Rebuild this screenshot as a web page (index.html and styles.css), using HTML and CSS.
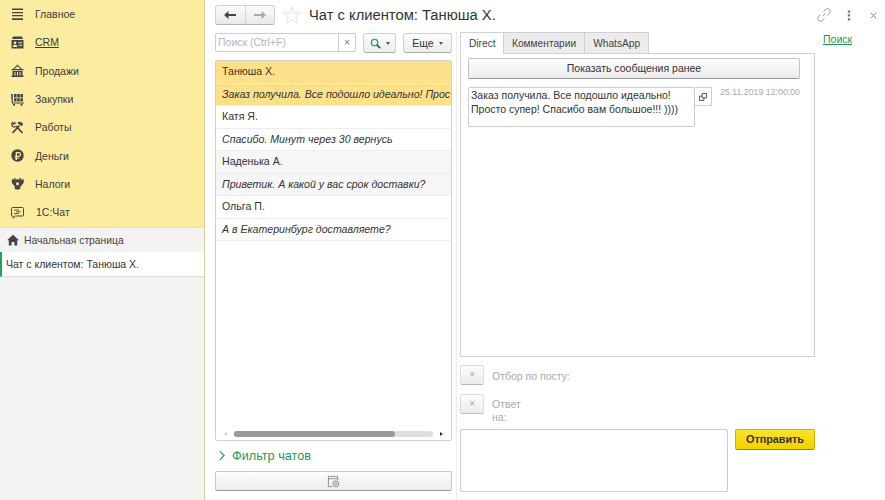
FILE: index.html
```html
<!DOCTYPE html>
<html>
<head>
    <link rel="stylesheet" href="styles.css">
    <title>Чат с клиентом</title>
</head>
<body>
    <div class="sidebar">
        <div class="menu">
            <div class="menu-item">
                <svg class="menu-icon" viewBox="0 0 13 13"><path d="M1 .5h11v1.600H1zM1 4h11v1.300H1zM1 7h11v1.300H1zM1 10.300h11V12H1z"/></svg>
                <span>Главное</span>
            </div>
            <div class="menu-item">
                <svg class="menu-icon" viewBox="0 0 13 13"><path d="M2 .5h9l1 2.500H1zM.5 4h12v8.500H.5z"/><circle cx="4" cy="6.800" r="1.300" fill="#fcec9f"/><path d="M1.800 11c0-1.600.8-2.200 2.200-2.200S6.200 9.400 6.200 11zM7.500 6.200h3.500v1.100H7.500zM7.500 8.700h3.500v1.100H7.500z" fill="#fcec9f"/></svg>
                <span class="underlined">CRM</span>
            </div>
            <div class="menu-item">
                <svg class="menu-icon" viewBox="0 0 13 13"><path fill-rule="evenodd" d="M6.500.5L11 5h1.500v1.200H.5V5H2zM3.500 5h6L6.500 2zM1.500 7h10v4.500h1V13H.5v-1.500h1zM3.500 8v3.500h1V8zM6 8v3.500h1V8zM8.500 8v3.500h1V8z"/></svg>
                <span>Продажи</span>
            </div>
            <div class="menu-item">
                <svg class="menu-icon" viewBox="0 0 13 13"><path d="M0 1h1.800v8.500H13v1H.8zM3 1h2.600v3.400H3zM6.200 1h2.600v3.400H6.200zM9.400 1H12v3.400H9.400zM3 5.200h2.600v3.400H3zM6.200 5.200h2.600v3.400H6.200zM9.400 5.200H12v3.400H9.400z"/><circle cx="3" cy="11.800" r="1.100"/><circle cx="10.500" cy="11.800" r="1.100"/></svg>
                <span>Закупки</span>
            </div>
            <div class="menu-item">
                <svg class="menu-icon outline" viewBox="0 0 13 13"><path d="M1.500 12L8.500 4.500" stroke-width="1.800"/><path d="M6.800 1.800c1.800-1.300 3.500-.6 5.200 1.400l-1.600 1.300-1.700-1.300z" class="solid"/><path d="M11.500 12L5 5" stroke-width="1.800"/><path d="M5.300 5.200A2.600 2.600 0 0 1 1.500 1.500l1.300 1.700 1.300-.7-.6-1.800" stroke-width="1.200"/></svg>
                <span>Работы</span>
            </div>
            <div class="menu-item">
                <svg class="menu-icon" viewBox="0 0 13 13"><path fill-rule="evenodd" d="M6.500.3a6.200 6.200 0 1 1 0 12.400A6.200 6.200 0 0 1 6.500.3zM4.700 3v3.800H3.800v1.100h.9v.8h-.9v1h.9V11H6V9.700h2.300v-1H6v-.8h1.700a2.450 2.450 0 0 0 0-4.900zM6 4.200h1.600a1.300 1.300 0 0 1 0 2.600H6z"/></svg>
                <span>Деньги</span>
            </div>
            <div class="menu-item">
                <svg class="menu-icon" viewBox="0 0 13 13"><path d="M3.500.5l1 .8.3 1.500L6.500 2l1.700.8.3-1.500 1-.8.6 1.500-.6 1L12.500 2l.3 3-.8 2-1 .5-.5 1.500-1.500.8L9.500 12l-2 .2-1 .8-1-.8-2-.2.5-2.200L3 9l-.5-1.500-1-.5-.8-2 .3-3 3 .5-.6-1z"/><path d="M6.500 5l1.500 1.200-.5 2h-2l-.5-2z" fill="#fcec9f"/></svg>
                <span>Налоги</span>
            </div>
            <div class="menu-item">
                <svg class="menu-icon outline" viewBox="0 0 13 13"><path d="M1.500 1.500h10a1 1 0 0 1 1 1v6.500a1 1 0 0 1-1 1H4.500l-2.500 2.200V10h-.5a1 1 0 0 1-1-1V2.500a1 1 0 0 1 1-1z"/><path d="M3 4h5M5 5.800h5M3 7.600h5" stroke-width=".9"/></svg>
                <span class="chat-label">1С:Чат</span>
            </div>
        </div>
        <div class="home-tab">
            <svg class="home-icon" viewBox="0 0 12 12"><path d="M6 .8L12 6.300h-1.800V11.500H7.400V8H4.600v3.500H1.800V6.300H0z"/></svg>
            <span>Начальная страница</span>
        </div>
        <div class="open-tab">Чат с клиентом: Танюша Х.</div>
    </div>

    <div class="content">
        <div class="top-bar">
            <div class="nav-buttons">
                <div class="nav-button back">
                    <svg viewBox="0 0 12 10"><path d="M0 5l4.500-4v3H12v2H4.500v3z"/></svg>
                </div>
                <div class="nav-button forward">
                    <svg viewBox="0 0 12 10"><path d="M12 5L7.500 1v3H0v2h7.500v3z"/></svg>
                </div>
            </div>
            <svg class="star" viewBox="0 0 20 20"><path d="M10 1l2.500 6.400 6.900.4-5.300 4.400 1.700 6.700L10 15.100l-5.800 3.800 1.700-6.700L.6 7.800l6.900-.4z"/></svg>
            <h1 class="page-title">Чат с клиентом: Танюша Х.</h1>
            <div class="window-icons">
                <svg class="link-icon" viewBox="0 0 14 14"><path d="M6 8L8.500 5.500M6.500 3.500L8.500 1.500a2.500 2.500 0 0 1 4 4l-2 2M7.500 10.500l-2 2a2.500 2.500 0 0 1-4-4l2-2"/></svg>
                <svg class="more-icon" viewBox="0 0 4 12"><path d="M.7.500h2.600v2.500H.7zM.7 4.700h2.600v2.500H.7zM.7 9h2.600v2.500H.7z"/></svg>
                <svg class="close-icon" viewBox="0 0 8 8"><path d="M1 1l6 6M7 1L1 7"/></svg>
            </div>
        </div>

        <div class="columns">
            <div class="chat-column">
                <div class="search-row">
                    <div class="search-box">
                        <span class="search-text">Поиск (Ctrl+F)</span>
                        <span class="search-clear">×</span>
                    </div>
                    <div class="small-button search-button">
                        <svg viewBox="0 0 12 12"><circle cx="5" cy="5" r="3.500"/><path d="M7.500 7.500L11 11" class="handle"/></svg>
                        <span class="caret"></span>
                    </div>
                    <div class="small-button more-button">Еще<span class="caret"></span></div>
                </div>

                <div class="chat-list">
                    <div class="chat-row selected">Танюша Х.</div>
                    <div class="chat-row selected preview">Заказ получила. Все подошло идеально! Прос</div>
                    <div class="chat-row">Катя Я.</div>
                    <div class="chat-row preview">Спасибо. Минут через 30 вернусь</div>
                    <div class="chat-row striped">Наденька А.</div>
                    <div class="chat-row striped preview">Приветик. А какой у вас срок доставки?</div>
                    <div class="chat-row">Ольга П.</div>
                    <div class="chat-row preview">А в Екатеринбург доставляете?</div>
                    <div class="scrollbar">
                        <span class="scroll-left"></span>
                        <div class="scroll-track"><div class="scroll-thumb"></div></div>
                        <span class="scroll-right"></span>
                    </div>
                </div>

                <div class="filter-row">
                    <svg viewBox="0 0 7 12"><path d="M1 1l5 5-5 5"/></svg>
                    <span>Фильтр чатов</span>
                </div>
                <div class="settings-button">
                    <svg viewBox="0 0 14 14"><path d="M1.500 12.500v-11h10v4M1.500 4h10M1.500 12.500h4"/><circle cx="9.500" cy="9.500" r="3.200"/><circle cx="9.500" cy="9.500" r="1.200"/></svg>
                </div>
            </div>

            <div class="messages-column">
                <div class="tabs">
                    <div class="tab active">Direct</div>
                    <div class="tab">Комментарии</div>
                    <div class="tab">WhatsApp</div>
                </div>
                <div class="tab-panel">
                    <div class="earlier-button">Показать сообщения ранее</div>
                    <div class="message-row">
                        <div class="message-text">Заказ получила. Все подошло идеально! Просто супер! Спасибо вам большое!!! ))))</div>
                        <div class="copy-button">
                            <svg viewBox="0 0 9 9"><path d="M3.500.5h5v5h-5zM.5 3.500h3M.5 3.500v5h5v-3"/></svg>
                        </div>
                        <div class="message-date">25.11.2019 12:00:00</div>
                    </div>
                </div>
                <div class="filter-line">
                    <div class="clear-button">×</div>
                    <div class="filter-label post-label">Отбор по посту:</div>
                </div>
                <div class="filter-line reply-line">
                    <div class="clear-button">×</div>
                    <div class="filter-label reply-label">Ответ на:</div>
                </div>
                <div class="send-row">
                    <div class="send-input"></div>
                    <div class="send-button">Отправить</div>
                </div>
            </div>

            <a class="search-link" href="#">Поиск</a>
        </div>
    </div>
</body>
</html>
```

FILE: styles.css
```css
body {
    margin: 0;
    padding: 0;
    width: 885px;
    height: 500px;
    overflow: hidden;
    display: flex;
    background-color: #ffffff;
    color: #333333;
    font-family: 'Liberation Sans', Arial, sans-serif;
    font-size: 10.5px;
}

/* Left sidebar */
.sidebar {
    width: 204px;
    height: 500px;
    flex-shrink: 0;
    border-right: 1px solid #d8cf96;
    background-color: #f3f3f3;
}

.menu {
    height: 227px;
    background-color: #fcec9f;
    border-bottom: 1px solid #e6e0b8;
}

.menu-item {
    height: 28.3px;
    display: flex;
    align-items: center;
    padding-left: 11px;
    color: #3c3c3c;
}

.menu-icon {
    width: 13px;
    height: 13px;
    margin-right: 11px;
    fill: #454545;
}

.menu-icon.outline {
    fill: none;
    stroke: #454545;
}

.menu-icon .solid {
    fill: #454545;
}

.underlined {
    text-decoration: underline;
}

.chat-label {
    margin-left: 1px;
}

.home-tab {
    height: 24px;
    display: flex;
    align-items: center;
    padding-left: 7px;
    color: #444444;
    font-size: 10.3px;
}

.home-icon {
    width: 12px;
    height: 12px;
    margin-right: 5px;
    fill: #444444;
}

.open-tab {
    height: 24px;
    line-height: 24px;
    padding-left: 4px;
    background-color: #ffffff;
    border-left: 2px solid #1fa45c;
    border-bottom: 1px solid #dddddd;
    color: #333333;
}

/* Main content area */
.content {
    flex: 1;
    min-width: 0;
    padding-left: 10px;
    display: flex;
    flex-direction: column;
}

.top-bar {
    height: 32px;
    display: flex;
    align-items: center;
}

.nav-buttons {
    display: flex;
    width: 58px;
    height: 18px;
    margin-top: -2px;
    border: 1px solid #d0d0d0;
    border-bottom-color: #b0b0b0;
    border-radius: 3px;
    background: linear-gradient(#fbfbfb, #e9e9e9);
}

.nav-button {
    flex: 1;
    display: flex;
    align-items: center;
    justify-content: center;
}

.nav-button svg {
    width: 12px;
    height: 10px;
}

.back {
    border-right: 1px solid #d6d6d6;
    fill: #444444;
}

.forward {
    fill: #aaaaaa;
}

.star {
    width: 18px;
    height: 18px;
    margin-left: 8px;
    margin-right: 8px;
    margin-top: -2px;
    fill: none;
    stroke: #dcdcdc;
}

.page-title {
    margin: -3px 0 0 0;
    font-size: 14.75px;
    font-weight: normal;
    color: #333333;
}

.window-icons {
    margin-left: auto;
    display: flex;
    align-items: center;
    margin-right: 8px;
    margin-top: -2px;
}

.link-icon {
    width: 14px;
    height: 14px;
    fill: none;
    stroke: #999999;
    margin-right: 16px;
}

.more-icon {
    width: 4px;
    height: 11px;
    fill: #777777;
    margin-right: 19px;
}

.close-icon {
    width: 7px;
    height: 7px;
    fill: none;
    stroke: #777777;
}

.columns {
    flex: 1;
    min-height: 0;
    display: flex;
    align-items: flex-start;
}

/* Chat list column */
.chat-column {
    width: 237px;
    flex-shrink: 0;
    padding-right: 4px;
    margin-right: 3px;
    height: 468px;
    border-right: 1px dotted #dddddd;
}

.search-row {
    display: flex;
    align-items: flex-start;
    height: 28px;
}

.search-box {
    width: 139px;
    height: 17px;
    margin-top: 1px;
    display: flex;
    border: 1px solid #cccccc;
    border-radius: 2px;
    line-height: 17px;
    color: #b5b5b5;
}

.search-text {
    flex: 1;
    padding-left: 2px;
}

.search-clear {
    width: 16px;
    border-left: 1px solid #cccccc;
    text-align: center;
    color: #777777;
}

.small-button {
    height: 18px;
    margin-top: 1px;
    display: flex;
    align-items: center;
    justify-content: center;
    border: 1px solid #cfcfcf;
    border-bottom-color: #aaaaaa;
    border-radius: 3px;
    background: linear-gradient(#fcfcfc, #ececec);
}

.search-button {
    width: 31px;
    margin-left: 7px;
}

.search-button svg {
    width: 11px;
    height: 11px;
    fill: none;
    stroke: #2a9d5a;
    stroke-width: 1.4;
}

.search-button .handle {
    stroke: #555555;
    stroke-width: 2;
}

.more-button {
    width: 47px;
    margin-left: 7px;
}

.caret {
    margin-left: 5px;
    border-left: 2.500px solid transparent;
    border-right: 2.500px solid transparent;
    border-top: 3px solid #555555;
}

.chat-list {
    height: 379px;
    display: flex;
    flex-direction: column;
    border: 1px solid #d0d0d0;
    border-radius: 2px;
    overflow: hidden;
    font-size: 10.6px;
}

.chat-row {
    height: 22.500px;
    line-height: 20px;
    padding-left: 6px;
    border-bottom: 1px solid #eeeeee;
    box-sizing: border-box;
    white-space: nowrap;
    overflow: hidden;
    flex-shrink: 0;
}

.preview {
    font-style: italic;
}

.selected {
    background-color: #fde18a;
    border-bottom-color: #fdeeb8;
}

.striped {
    background-color: #f6f6f6;
}

.scrollbar {
    margin-top: auto;
    margin-bottom: 0;
    height: 13px;
    display: flex;
    align-items: center;
    padding: 0 8px;
}

.scroll-left {
    border-top: 2px solid transparent;
    border-bottom: 2px solid transparent;
    border-right: 3px solid #cccccc;
}

.scroll-right {
    border-top: 2px solid transparent;
    border-bottom: 2px solid transparent;
    border-left: 3px solid #333333;
}

.scroll-track {
    flex: 1;
    height: 6px;
    margin: 0 7px;
    border-radius: 3px;
    background-color: #dedede;
}

.scroll-thumb {
    width: 81%;
    height: 6px;
    border-radius: 3px;
    background-color: #999999;
}

.filter-row {
    height: 29px;
    display: flex;
    align-items: center;
    padding-left: 4px;
    color: #1a9a57;
    font-size: 12.700px;
}

.filter-row svg {
    width: 6px;
    height: 11px;
    margin-right: 7px;
    fill: none;
    stroke: #1a9a57;
    stroke-width: 1.300;
}

.settings-button {
    height: 18px;
    margin-top: 1px;
    display: flex;
    align-items: center;
    justify-content: center;
    border: 1px solid #c8c8c8;
    border-bottom-color: #999999;
    border-radius: 2px;
    background: linear-gradient(#fdfdfd, #ececec);
}

.settings-button svg {
    width: 13px;
    height: 13px;
    fill: none;
    stroke: #888888;
}

/* Messages column */
.messages-column {
    width: 355px;
    flex-shrink: 0;
}

.tabs {
    display: flex;
    height: 21px;
    font-size: 10.2px;
}

.tab {
    height: 21px;
    padding: 0 8px;
    line-height: 21px;
    border: 1px solid #d0d0d0;
    border-left: none;
    border-bottom: none;
    background-color: #ececec;
    box-sizing: border-box;
    color: #444444;
}

.tab.active {
    width: 44px;
    border-left: 1px solid #d0d0d0;
    background-color: #ffffff;
    height: 22px;
    z-index: 1;
}

.tab-panel {
    height: 298px;
    padding: 4px 14px 0 7px;
    border: 1px solid #d0d0d0;
}

.earlier-button {
    height: 19px;
    line-height: 19px;
    text-align: center;
    border: 1px solid #c4c4c4;
    border-bottom-color: #999999;
    border-radius: 2px;
    background: linear-gradient(#fdfdfd, #ececec);
}

.message-row {
    display: flex;
    align-items: flex-start;
    margin-top: 8px;
}

.message-text {
    width: 223px;
    height: 38px;
    padding: 0 0 0 2px;
    line-height: 14px;
    border: 1px solid #cccccc;
    border-radius: 2px;
    flex-shrink: 0;
    color: #333333;
}

.copy-button {
    width: 16px;
    height: 17px;
    display: flex;
    align-items: center;
    justify-content: center;
    border: 1px solid #d0d0d0;
    border-left: none;
}

.copy-button svg {
    width: 8px;
    height: 8px;
    fill: none;
    stroke: #444444;
}

.message-date {
    margin-left: 8px;
    font-size: 8.8px;
    line-height: 10px;
    color: #aaaaaa;
    white-space: nowrap;
}

.filter-line {
    display: flex;
    align-items: flex-start;
    margin-top: 8px;
    height: 21px;
}

.reply-line {
    height: 29px;
}

.clear-button {
    width: 22px;
    height: 18px;
    line-height: 16px;
    text-align: center;
    border: 1px solid #dddddd;
    border-bottom-color: #bbbbbb;
    border-radius: 2px;
    background: linear-gradient(#fdfdfd, #ececec);
    color: #aaaaaa;
}

.filter-label {
    margin-left: 8px;
    line-height: 13px;
    padding-top: 4px;
    color: #aaaaaa;
}

.post-label {
    padding-top: 5px;
}

.reply-label {
    width: 40px;
}

.send-row {
    display: flex;
    align-items: flex-start;
    justify-content: space-between;
    margin-top: 6px;
}

.send-input {
    width: 266px;
    height: 61px;
    border: 1px solid #cccccc;
    border-radius: 2px;
}

.send-button {
    width: 78px;
    height: 19px;
    line-height: 19px;
    text-align: center;
    font-weight: bold;
    font-size: 10.8px;
    color: #333333;
    border: 1px solid #c8b30a;
    border-bottom-color: #9a8a00;
    border-radius: 2px;
    background: linear-gradient(#fbe32a, #f4d100);
}

.search-link {
    margin-left: 8px;
    margin-top: 1px;
    color: #1a9a57;
    text-decoration: underline;
}
```
